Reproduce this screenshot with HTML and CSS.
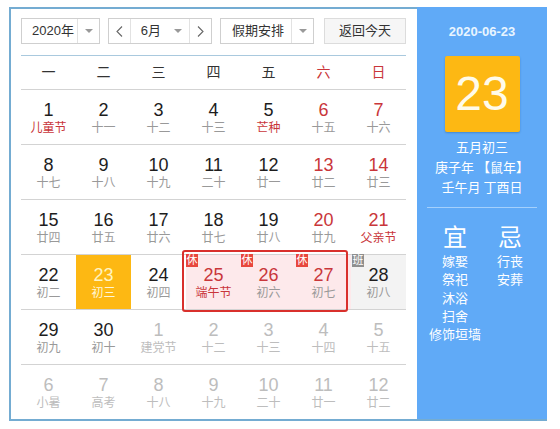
FILE: index.html
```html
<!DOCTYPE html>
<html lang="zh-CN">
<head>
<meta charset="utf-8">
<title>万年历</title>
<link rel="stylesheet" href="styles.css">
</head>
<body>
<div class="cal">
  <div class="main">
    <div class="toolbar">
      <div class="sel year">
        <span class="sel-text">2020年</span>
        <span class="sel-arrow divided"><i class="tri"></i></span>
      </div>
      <div class="sel month">
        <span class="nav prev"><svg width="7" height="11" viewBox="0 0 7 11"><path d="M6 0.5 L1 5.5 L6 10.5" fill="none" stroke="#666" stroke-width="1.1"/></svg></span>
        <span class="sel-text">6月</span>
        <span class="sel-arrow"><i class="tri"></i></span>
        <span class="nav next"><svg width="7" height="11" viewBox="0 0 7 11"><path d="M1 0.5 L6 5.5 L1 10.5" fill="none" stroke="#666" stroke-width="1.1"/></svg></span>
      </div>
      <div class="sel holiday">
        <span class="sel-text">假期安排</span>
        <span class="sel-arrow divided"><i class="tri"></i></span>
      </div>
      <div class="btn">返回今天</div>
    </div>
    <div class="week">
      <span>一</span><span>二</span><span>三</span><span>四</span><span>五</span><span class="we">六</span><span class="we">日</span>
    </div>
    <div class="grid">
      <div class="cell"><b>1</b><em class="fest">儿童节</em></div>
      <div class="cell"><b>2</b><em>十一</em></div>
      <div class="cell"><b>3</b><em>十二</em></div>
      <div class="cell"><b>4</b><em>十三</em></div>
      <div class="cell"><b>5</b><em class="fest">芒种</em></div>
      <div class="cell we"><b>6</b><em>十五</em></div>
      <div class="cell we"><b>7</b><em>十六</em></div>

      <div class="cell"><b>8</b><em>十七</em></div>
      <div class="cell"><b>9</b><em>十八</em></div>
      <div class="cell"><b>10</b><em>十九</em></div>
      <div class="cell"><b>11</b><em>二十</em></div>
      <div class="cell"><b>12</b><em>廿一</em></div>
      <div class="cell we"><b>13</b><em>廿二</em></div>
      <div class="cell we"><b>14</b><em>廿三</em></div>

      <div class="cell"><b>15</b><em>廿四</em></div>
      <div class="cell"><b>16</b><em>廿五</em></div>
      <div class="cell"><b>17</b><em>廿六</em></div>
      <div class="cell"><b>18</b><em>廿七</em></div>
      <div class="cell"><b>19</b><em>廿八</em></div>
      <div class="cell we"><b>20</b><em>廿九</em></div>
      <div class="cell we"><b>21</b><em class="fest">父亲节</em></div>

      <div class="cell"><b>22</b><em>初二</em></div>
      <div class="cell today"><b>23</b><em>初三</em></div>
      <div class="cell"><b>24</b><em>初四</em></div>
      <div class="cell hol"><span class="badge rest">休</span><b>25</b><em class="fest">端午节</em></div>
      <div class="cell hol"><span class="badge rest">休</span><b>26</b><em>初六</em></div>
      <div class="cell hol"><span class="badge rest">休</span><b>27</b><em>初七</em></div>
      <div class="cell work"><span class="badge duty">班</span><b>28</b><em>初八</em></div>

      <div class="cell"><b>29</b><em>初九</em></div>
      <div class="cell"><b>30</b><em>初十</em></div>
      <div class="cell other"><b>1</b><em>建党节</em></div>
      <div class="cell other"><b>2</b><em>十二</em></div>
      <div class="cell other"><b>3</b><em>十三</em></div>
      <div class="cell other"><b>4</b><em>十四</em></div>
      <div class="cell other"><b>5</b><em>十五</em></div>

      <div class="cell other"><b>6</b><em>小暑</em></div>
      <div class="cell other"><b>7</b><em>高考</em></div>
      <div class="cell other"><b>8</b><em>十八</em></div>
      <div class="cell other"><b>9</b><em>十九</em></div>
      <div class="cell other"><b>10</b><em>二十</em></div>
      <div class="cell other"><b>11</b><em>廿一</em></div>
      <div class="cell other"><b>12</b><em>廿二</em></div>

      <div class="hol-box"></div>
    </div>
  </div>
  <div class="panel">
    <div class="p-date">2020-06-23</div>
    <div class="p-day">23</div>
    <div class="p-lunar">五月初三</div>
    <div class="p-lunar">庚子年 【鼠年】</div>
    <div class="p-lunar">壬午月 丁酉日</div>
    <div class="p-sep"></div>
    <div class="p-yj">
      <div class="p-col">
        <div class="p-head">宜</div>
        <div class="p-item">嫁娶</div>
        <div class="p-item">祭祀</div>
        <div class="p-item">沐浴</div>
        <div class="p-item">扫舍</div>
        <div class="p-item">修饰垣墙</div>
      </div>
      <div class="p-col right">
        <div class="p-head">忌</div>
        <div class="p-item">行丧</div>
        <div class="p-item">安葬</div>
      </div>
    </div>
  </div>
</div>
</body>
</html>
```

FILE: styles.css
```css
* { box-sizing: border-box; }
html, body { margin: 0; padding: 0; background: #fff; }
body {
  font-family: "Liberation Sans", "Noto Sans CJK SC", sans-serif;
  color: #333;
}

.cal {
  margin: 7px 0 0 9px;
  width: 538px;
  display: flex;
  border-bottom: 2px solid #74acd2;
}

.main {
  width: 408px;
  height: 412px;
  border-left: 2px solid #74acd2;
  border-top: 2px solid #74acd2;
  padding: 9px 11px 0 10px;
}

/* toolbar */
.toolbar {
  display: flex;
  height: 26px;
  margin-bottom: 11px;
}
.sel {
  display: flex;
  align-items: stretch;
  border: 1px solid #cfcfcf;
  background: #fff;
  font-size: 13px;
  line-height: 24px;
  color: #333;
}
.sel-text { padding-left: 10px; }
.year { width: 79px; }
.year .sel-text { width: 55px; }
.month { width: 104px; margin-left: 8px; }
.month .sel-text { width: 37px; }
.holiday { width: 94px; margin-left: 8px; }
.holiday .sel-text { width: 70px; padding-left: 11px; }
.sel-arrow {
  width: 22px;
  display: flex;
  align-items: center;
  justify-content: center;
}
.divided { border-left: 1px solid #e2e2e2; }
.month .sel-arrow { width: 22px; }
.tri {
  display: block;
  width: 0; height: 0;
  border-left: 4px solid transparent;
  border-right: 4px solid transparent;
  border-top: 4px solid #999;
}
.nav {
  width: 22px;
  display: flex;
  align-items: center;
  justify-content: center;
}
.prev { border-right: 1px solid #e2e2e2; }
.next { border-left: 1px solid #e2e2e2; }
.btn {
  margin-left: 10px;
  width: 82px;
  border: 1px solid #dcdcdc;
  background: #f6f6f6;
  font-size: 13px;
  line-height: 24px;
  text-align: center;
  color: #333;
}

/* week header */
.week {
  display: grid;
  grid-template-columns: repeat(7, 55px);
  height: 34px;
  border-top: 1px solid #a9c9de;
  font-size: 14px;
  line-height: 33px;
  text-align: center;
  color: #333;
}
.week .we { color: #c9363a; }

/* grid */
.grid {
  position: relative;
  display: grid;
  grid-template-columns: repeat(7, 55px);
  grid-auto-rows: 55px;
}
.cell {
  position: relative;
  border-top: 1px solid #d3d3d3;
  padding-top: 10px;
  text-align: center;
}
.cell b {
  display: block;
  font-weight: normal;
  font-size: 18px;
  line-height: 20px;
  color: #1d1d1d;
}
.cell em {
  display: block;
  font-style: normal;
  font-size: 12px;
  line-height: 16px;
  color: #999;
}
.cell em.fest { color: #c9363a; }
.cell.we b { color: #c9363a; }
.cell.other b, .cell.other em { color: #bdbdbd; }

.cell.today { background: #fdb813; }
.cell.today b { color: #fff4c2; }
.cell.today em { color: #fff6d8; }

.cell.hol { background: #fde9eb; }
.cell.hol b { color: #c9363a; }
.cell.work { background: #f3f3f3; }

.badge {
  position: absolute;
  left: 0;
  top: -1px;
  width: 12px;
  height: 13px;
  font-size: 11px;
  line-height: 13px;
  color: #fff;
  text-align: center;
}
.badge.rest { background: #e8473d; }
.badge.duty { background: #8f8f8f; left: 1px; }

.hol-box {
  position: absolute;
  left: 161px;
  top: 161px;
  width: 166px;
  height: 62px;
  border: 2px solid #d9302c;
  border-radius: 3px;
  pointer-events: none;
}

/* side panel */
.panel {
  width: 130px;
  height: 412px;
  background: #60aaf7;
  color: #fff;
  text-align: center;
  padding-top: 17px;
}
.p-date {
  font-size: 13px;
  font-weight: bold;
  line-height: 16px;
  color: #e9f5ff;
}
.p-day {
  width: 75px;
  height: 76px;
  margin: 16px auto 0;
  background: #fdb813;
  border-radius: 2px;
  box-shadow: 0 1px 2px rgba(0, 60, 120, 0.3);
  font-size: 48px;
  line-height: 76px;
  color: #fffbea;
}
.p-lunar {
  font-family: "Noto Sans CJK SC", sans-serif;
  font-size: 13px;
  line-height: 20px;
}
.p-day + .p-lunar { margin-top: 5px; }
.p-sep {
  height: 1px;
  margin: 10px 10px 0;
  background: #a4d0fc;
}
.p-yj {
  display: grid;
  grid-template-columns: 76px 34px;
  margin-top: 13px;
}
.p-head {
  font-family: "Noto Sans CJK SC", sans-serif;
  font-size: 24px;
  line-height: 30px;
  margin-bottom: 1px;
}
.p-item {
  font-family: "Noto Sans CJK SC", sans-serif;
  font-size: 13px;
  line-height: 18.3px;
  white-space: nowrap;
}
```
